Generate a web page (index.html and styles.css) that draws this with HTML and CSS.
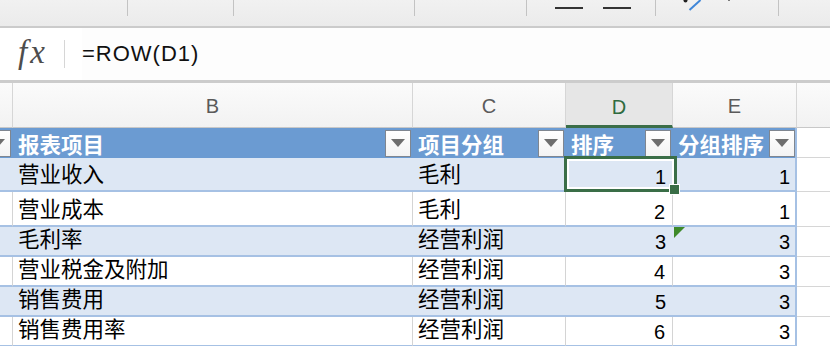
FILE: index.html
```html
<!DOCTYPE html>
<html lang="zh-CN">
<head>
<meta charset="utf-8">
<title>Sheet</title>
<link rel="stylesheet" href="styles.css">
</head>
<body>
<div class="toolbar">
  <div class="seg w1"></div>
  <div class="seg w2"></div>
  <div class="seg w3"></div>
  <div class="seg w4"></div>
  <div class="seg w5"><span class="dash"></span><span class="dash"></span></div>
  <div class="seg w6">
    <svg class="tools" width="123" height="16" viewBox="0 0 123 16">
      <circle cx="29.5" cy="0.5" r="2" fill="#222"/>
      <line x1="44.5" y1="0" x2="33.5" y2="10" stroke="#3f86d8" stroke-width="2"/>
      <circle cx="73" cy="0" r="1" fill="#555"/>
    </svg>
  </div>
  <div class="seg w7"></div>
</div>

<div class="fbar">
  <div class="fx">fx</div>
  <div class="fsep"></div>
  <div class="ftext">=ROW(D1)</div>
</div>

<div class="sheet">
  <!-- column headers -->
  <div class="ch"></div>
  <div class="ch">B</div>
  <div class="ch">C</div>
  <div class="ch sel">D</div>
  <div class="ch">E</div>
  <div class="ch last"></div>

  <!-- table header -->
  <div class="th stub"><span class="fbtn"></span></div>
  <div class="th"><span class="tt">报表项目</span><span class="fbtn"></span></div>
  <div class="th"><span class="tt">项目分组</span><span class="fbtn"></span></div>
  <div class="th"><span class="tt">排序</span><span class="fbtn"></span></div>
  <div class="th te"><span class="tt">分组排序</span><span class="fbtn"></span></div>
  <div class="out"></div>

  <!-- row 1 -->
  <div class="c band"></div>
  <div class="c band">营业收入</div>
  <div class="c band">毛利</div>
  <div class="c band num active">1<span class="selbox"><span class="handle"></span></span></div>
  <div class="c band num ce">1</div>
  <div class="out"></div>

  <!-- row 2 -->
  <div class="c wh"></div>
  <div class="c wh">营业成本</div>
  <div class="c wh">毛利</div>
  <div class="c wh num">2</div>
  <div class="c wh num ce">1</div>
  <div class="out"></div>

  <!-- row 3 -->
  <div class="c band"></div>
  <div class="c band">毛利率</div>
  <div class="c band">经营利润</div>
  <div class="c band num">3</div>
  <div class="c band num ce err">3</div>
  <div class="out"></div>

  <!-- row 4 -->
  <div class="c wh"></div>
  <div class="c wh">营业税金及附加</div>
  <div class="c wh">经营利润</div>
  <div class="c wh num">4</div>
  <div class="c wh num ce">3</div>
  <div class="out"></div>

  <!-- row 5 -->
  <div class="c band"></div>
  <div class="c band">销售费用</div>
  <div class="c band">经营利润</div>
  <div class="c band num">5</div>
  <div class="c band num ce">3</div>
  <div class="out"></div>

  <!-- row 6 -->
  <div class="c wh"></div>
  <div class="c wh">销售费用率</div>
  <div class="c wh">经营利润</div>
  <div class="c wh num">6</div>
  <div class="c wh num ce">3</div>
  <div class="out"></div>
</div>
</body>
</html>
```

FILE: styles.css
```css
html, body {
  margin: 0;
  padding: 0;
  background: #ffffff;
}
body {
  width: 830px;
  height: 346px;
  overflow: hidden;
  font-family: "Liberation Sans", "Noto Sans CJK SC", sans-serif;
  color: #000;
}

/* ---------- toolbar ---------- */
.toolbar {
  display: flex;
  align-items: flex-start;
  height: 26px;
  background: linear-gradient(#f1f1f1, #ebebeb);
  border-bottom: 2px solid #cbcbcb;
}
.seg {
  height: 16px;
  border-right: 1px solid #c3c3c3;
  box-sizing: border-box;
  flex-shrink: 0;
  position: relative;
}
.w1 { width: 128px; }
.w2 { width: 106px; }
.w3 { width: 181px; }
.w4 { width: 112px; }
.w5 { width: 129px; display: flex; gap: 20px; padding-left: 28px; padding-top: 7px; }
.w6 { width: 123px; }
.w7 { flex: 1; border-right: none; }
.dash {
  display: block;
  width: 28px;
  height: 2px;
  background: #333;
}
.tools { display: block; }

/* ---------- formula bar ---------- */
.fbar {
  height: 52px;
  display: flex;
  align-items: center;
  border-bottom: 3px solid #cccccc;
}
.fx {
  font-family: "Liberation Serif", serif;
  font-style: italic;
  font-size: 33px;
  color: #4d4d4d;
  letter-spacing: 3px;
  margin-left: 18px;
  width: 46px;
  line-height: 1;
  padding-bottom: 4px;
}
.fsep {
  width: 1px;
  height: 28px;
  background: #d6d6d6;
}
.ftext {
  margin-left: 17px;
  font-size: 22px;
  letter-spacing: 1px;
  color: #111;
  flex: 1;
  background: #fdfdfd;
  height: 100%;
  display: flex;
  align-items: center;
}

/* ---------- sheet grid ---------- */
.sheet {
  display: grid;
  grid-template-columns: 13px 400px 153px 107px 124px 1fr;
  grid-template-rows: 45px 30px 34px 35px 30px 30px 30px 30px;
}

.ch {
  background: linear-gradient(#fbfbfb, #f2f2f2);
  border-right: 1px solid #d6d6d6;
  border-bottom: 1px solid #c8c8c8;
  display: flex;
  align-items: center;
  justify-content: center;
  padding-top: 3px;
  font-size: 20px;
  color: #5a5a5a;
  box-sizing: border-box;
}
.ch.sel {
  background: #e6e6e6;
  color: #2f6b3f;
  border-bottom: 3px solid #3b6e48;
  padding-top: 6px;
}
.ch.last { border-right: none; }

.th {
  background: #6b9bd2;
  color: #fff;
  font-weight: bold;
  font-size: 21.5px;
  display: flex;
  align-items: center;
  padding-left: 5px;
  overflow: hidden;
  box-sizing: border-box;
}
.th.stub {
  padding-left: 0;
  justify-content: flex-end;
}
.th.te { border-right: 2px solid #9fbde3; }
.tt {
  white-space: nowrap;
  margin-top: 1px;
}
.fbtn {
  flex-shrink: 0;
  margin-left: auto;
  margin-right: 2px;
  width: 26px;
  height: 27px;
  box-sizing: border-box;
  background: linear-gradient(#ffffff, #f3f3f3);
  border: 1px solid #7f8690;
  display: flex;
  align-items: center;
  justify-content: center;
}
.th.te .fbtn { margin-right: 0; }
.fbtn::before {
  content: "";
  width: 0;
  height: 0;
  border-left: 7px solid transparent;
  border-right: 7px solid transparent;
  border-top: 8px solid #6e6e6e;
}

.out {
  border-bottom: 1px solid #d6d6d6;
  background: #fff;
}

.c {
  box-sizing: border-box;
  display: flex;
  align-items: flex-end;
  padding: 0 5px 1px;
  font-size: 21.5px;
  line-height: 1.2;
  white-space: nowrap;
  border-bottom: 2px solid #a6c1e4;
}
.band { background: #dde7f4; }
.wh {
  background: #fff;
  border-right: 1px solid #d4d4d4;
}
.num {
  justify-content: flex-end;
  padding-right: 7px;
  font-size: 20px;
  padding-bottom: 1px;
}
.ce {
  border-right: 2px solid #a6c1e4;
  padding-right: 5px;
}

.active { position: relative; }
.selbox {
  position: absolute;
  left: -2px;
  top: -2px;
  right: -4px;
  bottom: -2px;
  border: 3px solid #3a6e47;
  box-shadow: inset 0 0 0 2px #ffffff;
}
.handle {
  position: absolute;
  right: -6px;
  bottom: -6px;
  width: 9px;
  height: 9px;
  background: #3a6e47;
  border: 1px solid #ffffff;
}

.err { position: relative; }
.err::before {
  content: "";
  position: absolute;
  left: 1px;
  top: 0;
  width: 0;
  height: 0;
  border-top: 11px solid #3e8a2a;
  border-right: 11px solid transparent;
}
```
